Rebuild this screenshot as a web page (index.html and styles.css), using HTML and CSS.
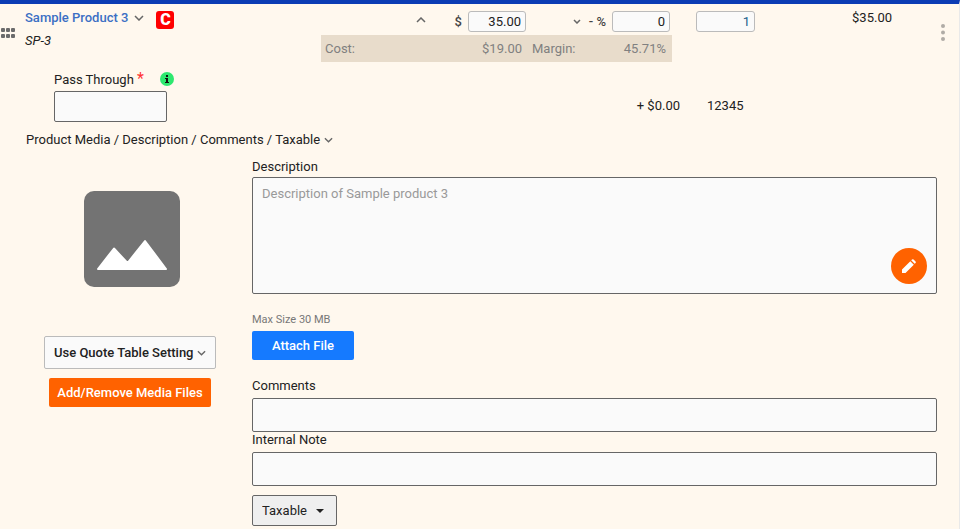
FILE: index.html
```html
<!DOCTYPE html>
<html lang="en">
<head>
    <meta charset="UTF-8">
    <meta name="viewport" content="width=device-width, initial-scale=1">
    <title>Quote - Sample Product 3</title>
    <link rel="stylesheet" href="styles.css">
</head>

<body>
<main class="line-item">
    <!-- product row: name, price, discount, quantity, total -->
    <section class="item-row">
        <button type="button" class="icon-button drag-handle" aria-label="Reorder">
            <svg width="15" height="11" viewBox="0 0 15 11" fill="#6b6b6b">
                <rect x="0" y="0" width="4" height="4" rx="1"/><rect x="5" y="0" width="4" height="4" rx="1"/><rect x="10" y="0" width="4" height="4" rx="1"/>
                <rect x="0" y="6" width="4" height="4" rx="1"/><rect x="5" y="6" width="4" height="4" rx="1"/><rect x="10" y="6" width="4" height="4" rx="1"/>
            </svg>
        </button>

        <div class="product">
            <div class="product-title">
                <a href="#details" class="product-name">Sample Product 3</a>
                <svg class="chevron" width="10" height="6" viewBox="0 0 10 6"><path d="M1 1l4 4 4-4"/></svg>
                <span class="badge">C</span>
            </div>
            <div class="sku">SP-3</div>
        </div>

        <div class="pricing">
            <div class="price-inputs">
                <div class="price-group">
                    <button type="button" class="icon-button markup-toggle" aria-label="Markup">
                        <svg class="chevron" width="10" height="6" viewBox="0 0 10 6"><path d="M1 5l4-4 4 4"/></svg>
                    </button>
                    <label class="unit" for="price">$</label>
                    <input type="text" id="price" class="amount" value="35.00">
                </div>
                <div class="price-group">
                    <button type="button" class="icon-button discount-toggle" aria-label="Discount type">
                        <svg class="chevron" width="8" height="5" viewBox="0 0 8 5"><path d="M1 1l3 3 3-3"/></svg>
                    </button>
                    <label class="unit" for="discount">- %</label>
                    <input type="text" id="discount" class="amount" value="0">
                </div>
            </div>
            <dl class="margin-bar">
                <dt>Cost:</dt><dd>$19.00</dd>
                <dt>Margin:</dt><dd>45.71%</dd>
            </dl>
        </div>

        <div class="quantity">
            <input type="text" class="amount" value="1" aria-label="Quantity">
        </div>
        <div class="total">$35.00</div>
        <button type="button" class="icon-button row-menu" aria-label="More actions">
            <svg width="4" height="17" viewBox="0 0 4 17" fill="#b0aca6">
                <circle cx="2" cy="2" r="2"/><circle cx="2" cy="8.500" r="2"/><circle cx="2" cy="15" r="2"/>
            </svg>
        </button>
    </section>

    <!-- custom field -->
    <section class="option-row">
        <div class="option-field">
            <div class="option-label">
                <label for="pass-through">Pass Through <span class="required">*</span></label>
                <svg class="info" width="14" height="14" viewBox="0 0 14 14">
                    <circle cx="7" cy="7" r="7" fill="#2ee86f"/>
                    <path d="M6 3h2v2H6zM5 6h3v4h1v1H5v-1h1V7H5z" fill="#111"/>
                </svg>
            </div>
            <input type="text" id="pass-through" class="field">
        </div>
        <div class="option-price">+ $0.00</div>
        <div class="option-code">12345</div>
    </section>

    <button type="button" class="details-toggle">
        Product Media / Description / Comments / Taxable
        <svg class="chevron" width="9" height="6" viewBox="0 0 10 6"><path d="M1 1l4 4 4-4"/></svg>
    </button>

    <section class="details" id="details">
        <div class="media">
            <svg class="placeholder" width="96" height="96" viewBox="0 0 96 96">
                <rect width="96" height="96" rx="10" fill="#737373"/>
                <path d="M14 78L30 57.500L43.500 72L61 50L82 78Z" fill="#fff" stroke="#fff" stroke-width="2" stroke-linejoin="round"/>
            </svg>
            <div class="select media-select">
                <select aria-label="Media display">
                    <option>Use Quote Table Setting</option>
                    <option>Show</option>
                    <option>Hide</option>
                </select>
                <svg class="chevron" width="9" height="6" viewBox="0 0 10 6"><path d="M1 1l4 4 4-4"/></svg>
            </div>
            <button type="button" class="button button-orange">Add/Remove Media Files</button>
        </div>

        <div class="notes">
            <label for="description" class="description-label">Description</label>
            <div class="description">
                <textarea id="description" class="field" placeholder="Description of Sample product 3"></textarea>
                <button type="button" class="edit-button" aria-label="Edit description">
                    <svg width="14" height="14" viewBox="0 0 16 16" fill="#fff">
                        <path d="M0 12L9.500 2.500L13.500 6.500L4 16H0zM10.500 1.500L11.500 .5Q12.300 -.2 13.200 .5L15.500 2.800Q16.200 3.700 15.500 4.500L14.500 5.500z"/>
                    </svg>
                </button>
            </div>

            <div class="hint">Max Size 30 MB</div>
            <button type="button" class="button button-blue">Attach File</button>

            <label for="comments">Comments</label>
            <input type="text" id="comments" class="field">
            <label for="internal-note">Internal Note</label>
            <input type="text" id="internal-note" class="field">

            <div class="select tax-select">
                <select aria-label="Tax status">
                    <option>Taxable</option>
                    <option>Non-taxable</option>
                </select>
                <svg width="8" height="4" viewBox="0 0 8 4" fill="#222"><path d="M0 0h8L4 4z"/></svg>
            </div>
        </div>
    </section>
</main>
</body>
</html>
```

FILE: styles.css
```css
* {
    box-sizing: border-box;
}
body {
    margin: 0;
    background: #fff8ee;
    color: #222;
    font-family: Roboto, "Liberation Sans", sans-serif;
    font-size: 13px;
    line-height: 16px;
}
input, select, textarea, button {
    font: inherit;
    color: inherit;
}
button {
    cursor: pointer;
}
svg {
    display: block;
    flex: none;
}

.line-item {
    min-height: 100vh;
    border-top: 4px solid #0c3cb4;
    border-right: 1px solid #e9e9e9;
}
.icon-button {
    padding: 0;
    border: 0;
    background: none;
}
.chevron {
    fill: none;
    stroke: #666;
    stroke-width: 1.5;
}

/* product row */
.item-row {
    display: grid;
    grid-template-columns: 25px 1fr 351px 83px 137px 67px;
    align-items: start;
    padding-top: 6px;
}
.drag-handle {
    padding: 18px 0 0 1px;
}
.product-title {
    display: flex;
    align-items: center;
    gap: 6px;
    height: 16px;
}
.product-name {
    color: #3b6fc4;
    font-weight: 500;
    text-decoration: none;
}
.badge {
    width: 18px;
    height: 18px;
    margin: 4px 0 0 6px;
    border-radius: 3px;
    background: #f00;
    color: #fff;
    font-size: 16px;
    font-weight: 900;
    line-height: 18px;
    text-align: center;
}
.sku {
    margin-top: 7px;
    font-style: italic;
}

.price-inputs {
    display: grid;
    grid-template-columns: 205px 1fr;
    padding: 1px 2px 3px 0;
}
.price-group {
    display: flex;
    align-items: center;
    justify-content: flex-end;
    gap: 6px;
}
.markup-toggle {
    margin: 0 23px 4px 0;
}
.discount-toggle {
    margin-right: 2px;
}
.unit {
    color: #444;
    font-weight: 500;
}
.amount {
    width: 58px;
    height: 21px;
    padding: 0 4px;
    border: 1px solid #bbb;
    border-radius: 3px;
    background: #fafafa;
    text-align: right;
}
.margin-bar {
    display: grid;
    grid-template-columns: 40px 157px 60px 1fr;
    margin: 0;
    padding: 6px 6px 5px 4px;
    background: #e8dccb;
    color: #808080;
}
.margin-bar dt:nth-of-type(2) {
    padding-left: 10px;
}
.margin-bar dd {
    margin: 0;
    text-align: right;
}
.quantity {
    padding: 1px 0 0 24px;
}
.quantity .amount {
    width: 100%;
    color: #1c5f8c;
}
.total {
    text-align: right;
}
.row-menu {
    justify-self: center;
    margin: 14px 0 0 34px;
}

/* custom field row */
.option-row {
    display: grid;
    grid-template-columns: 1fr 351px 279px;
    align-items: end;
    padding: 9px 0 0 54px;
}
.option-field {
    width: 113px;
}
.option-label {
    display: flex;
    align-items: center;
    gap: 16px;
    height: 16px;
    margin-bottom: 4px;
    white-space: nowrap;
}
.required {
    color: #f33;
    font-size: 16px;
}
.field {
    display: block;
    width: 100%;
    border: 1px solid #666;
    border-radius: 2px;
    background: #fafafa;
}
.option-field .field {
    height: 31px;
}
.option-price, .option-code {
    padding-bottom: 8px;
}
.option-price {
    grid-column: 2;
    text-align: right;
}
.option-code {
    padding-left: 27px;
}

/* expandable details */
.details-toggle {
    display: flex;
    align-items: center;
    gap: 4px;
    margin: 10px 0 0 26px;
    padding: 0;
    border: 0;
    background: none;
}
.details {
    display: grid;
    grid-template-columns: 208px 1fr;
    gap: 18px;
    padding: 11px 22px 3px 26px;
}
.media {
    display: flex;
    flex-direction: column;
    align-items: center;
    padding-top: 32px;
}
.placeholder {
    margin-left: 3px;
}

/* select and its arrow share one grid cell */
.select {
    display: inline-grid;
    align-items: center;
}
.select select, .select svg {
    grid-area: 1 / 1;
}
.select select {
    width: 100%;
    height: 100%;
    padding: 0 9px;
    border: 1px solid #bbb;
    border-radius: 2px;
    background: #fafafa;
    appearance: none;
}
.select svg {
    justify-self: end;
    margin-right: 10px;
    pointer-events: none;
}
.media-select {
    width: 172px;
    height: 33px;
    margin: 49px 0 9px;
    font-weight: 500;
}
.tax-select {
    width: 85px;
    height: 31px;
    margin-top: 9px;
}
.tax-select select {
    border-color: #666;
    background: #efefef;
}
.tax-select svg {
    margin-right: 13px;
}

.button {
    min-height: 29px;
    padding: 6px 8px;
    border: 0;
    border-radius: 2px;
    color: #fff;
    font-weight: 500;
}
.button-orange {
    background: #ff6200;
}
.button-blue {
    display: block;
    width: 102px;
    margin-bottom: 18px;
    background: #157aff;
}

.notes label {
    display: block;
    margin-bottom: 4px;
}
.notes .description-label {
    margin-bottom: 2px;
}
.notes input {
    height: 34px;
    padding: 0 9px;
}
.description {
    position: relative;
}
.description textarea {
    height: 117px;
    padding: 8px 9px;
    resize: none;
}
.description textarea::placeholder {
    color: #999;
}
/* floats over the corner of the textarea */
.edit-button {
    position: absolute;
    right: 10px;
    bottom: 10px;
    display: grid;
    place-items: center;
    width: 36px;
    height: 36px;
    padding: 0;
    border: 0;
    border-radius: 50%;
    background: #ff6200;
}
.hint {
    margin: 18px 0 3px;
    color: #777;
    font-size: 11px;
}
```
